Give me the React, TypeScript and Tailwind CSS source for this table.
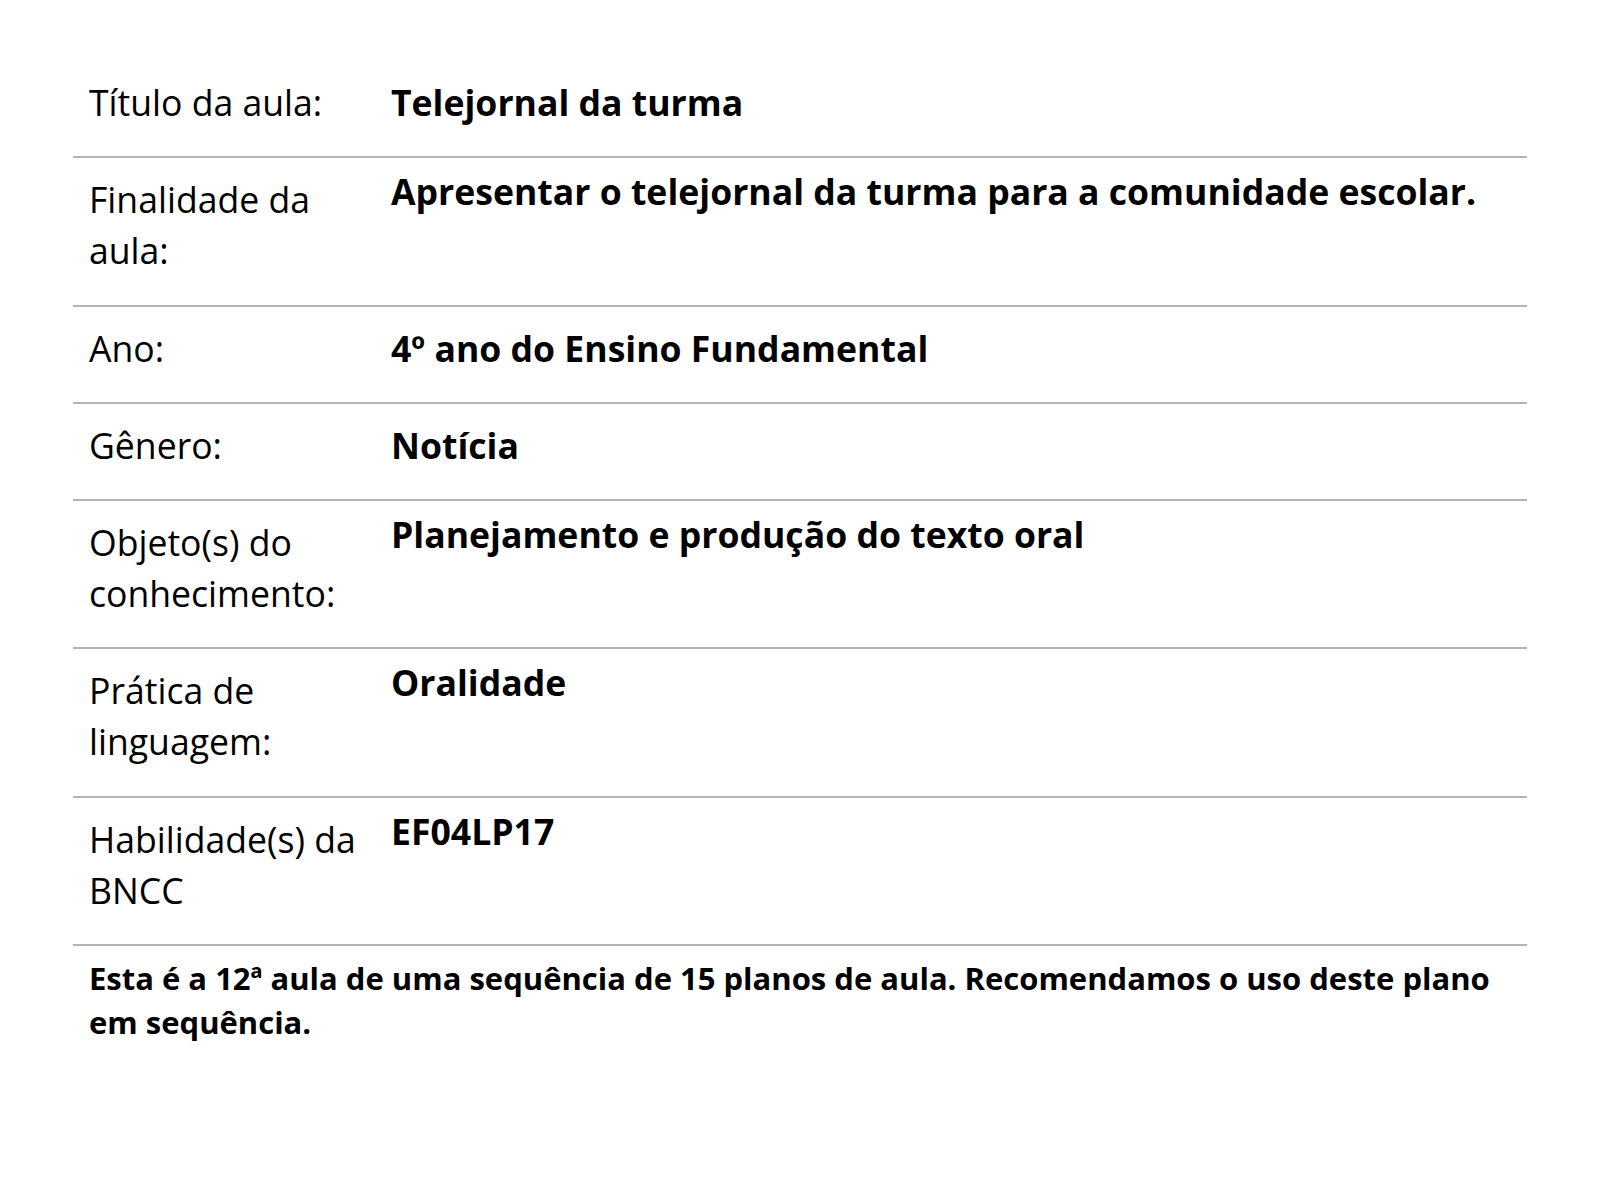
import React from 'react'

type Row = { label: string; value: string; multi?: boolean }

const ROWS: Row[] = [
  { label: 'Título da aula:', value: 'Telejornal da turma' },
  { label: 'Finalidade da aula:', value: 'Apresentar o telejornal da turma para a comunidade escolar.', multi: true },
  { label: 'Ano:', value: '4º ano do Ensino Fundamental' },
  { label: 'Gênero:', value: 'Notícia' },
  { label: 'Objeto(s) do conhecimento:', value: 'Planejamento e produção do texto oral', multi: true },
  { label: 'Prática de linguagem:', value: 'Oralidade', multi: true },
  { label: 'Habilidade(s) da BNCC', value: 'EF04LP17', multi: true },
]

export default function App() {
  return (
    <div className="min-h-screen bg-white pt-[61px] pl-[73px] pr-[73px] text-black font-['Open_Sans',sans-serif]">
      <div className="flex flex-col">
        {ROWS.map(row => (
          <div key={row.label} className="flex border-b-2 border-[#b4b4b4]">
            <div
              className={`w-[318px] shrink-0 pl-4 pr-4 pt-4 text-[35.6px] leading-[51px] ${row.multi ? 'pb-[28.5px]' : 'pb-[28px]'}`}
            >
              {row.label}
            </div>
            <div
              className={`flex-1 pt-4 text-[35.6px] leading-[51px] font-bold ${row.multi ? '-mt-[8px]' : ''}`}
            >
              {row.value}
            </div>
          </div>
        ))}
        <p className="pl-4 pr-4 pt-[10px] text-[31px] leading-[44px] font-bold">
          Esta é a 12ª aula de uma sequência de 15 planos de aula. Recomendamos o uso deste plano em sequência.
        </p>
      </div>
    </div>
  )
}
